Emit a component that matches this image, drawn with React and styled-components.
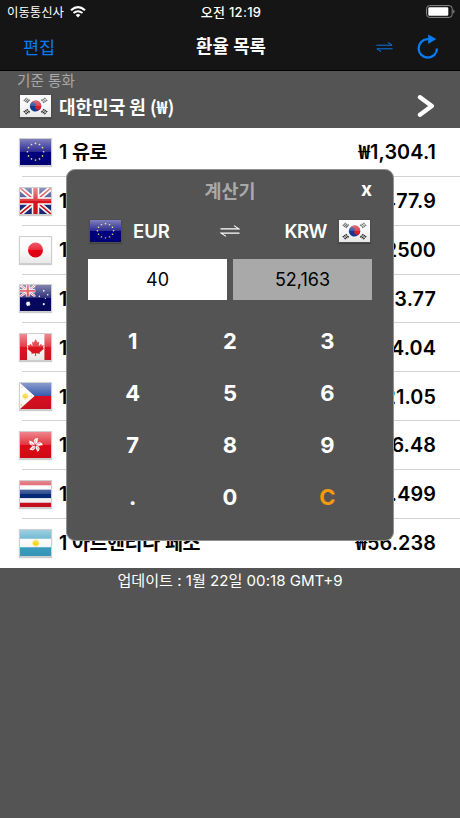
import React, { useState } from "react";
import styled, { createGlobalStyle } from "styled-components";

const stars = [...Array(12)].map((_, i) => {
  const a = (i * Math.PI) / 6;
  return [16.5 + 8.6 * Math.sin(a), 13.7 - 9 * Math.cos(a)];
});

const UnionJack = () => (
  <>
    <rect width="33" height="28" fill="#1b2a7c" />
    <path d="M0 0L33 28M33 0L0 28" stroke="#fff" strokeWidth="5.4" />
    <path d="M0 0L33 28M33 0L0 28" stroke="#d8141c" strokeWidth="1.8" />
    <path d="M16.5 0V28M0 14H33" stroke="#fff" strokeWidth="8" />
    <path d="M16.5 0V28M0 14H33" stroke="#d8141c" strokeWidth="4.6" />
  </>
);

const Trigram = ({ x, y, angle, broken }) => (
  <g transform={`translate(${x} ${y}) rotate(${angle})`}>
    <path
      d="M-2.6 -2H2.6M-2.6 0H2.6M-2.6 2H2.6"
      stroke="#2a2a2a"
      strokeWidth="1.4"
      strokeDasharray={broken ? "2.3 .6" : "none"}
    />
  </g>
);

const drawings = {
  eu: (
    <>
      <rect width="33" height="28" fill="#00007c" />
      {stars.map(([x, y]) => (
        <circle key={`${x}${y}`} cx={x} cy={y} r="0.9" fill="#e5dc70" />
      ))}
    </>
  ),
  gb: <UnionJack />,
  jp: (
    <>
      <rect width="33" height="28" fill="#fafafa" />
      <circle cx="16.5" cy="14" r="8" fill="#e60012" />
    </>
  ),
  au: (
    <>
      <rect width="33" height="28" fill="#05085f" />
      <clipPath id="canton">
        <rect width="33" height="28" />
      </clipPath>
      <g transform="scale(.5 .45)" clipPath="url(#canton)">
        <UnionJack />
      </g>
      <g fill="#fff">
        <path d="M8.4 17l.7 1.4 1.5-.3-.3 1.5 1.2 1-1.4.7.1 1.5-1.5-.6-1.4.7-.1-1.6-1.3-.8 1.2-1-.3-1.5 1.5.3z" />
        <circle cx="25.3" cy="6.3" r="0.9" />
        <circle cx="20.6" cy="12" r="0.8" />
        <circle cx="29.5" cy="10.5" r="0.9" />
        <circle cx="27" cy="14.4" r="0.6" />
        <circle cx="25.3" cy="20.6" r="1.1" />
      </g>
    </>
  ),
  ca: (
    <>
      <rect width="33" height="28" fill="#fafafa" />
      <path d="M0 0H7.5V28H0zM26 0H33V28H26z" fill="#dc1420" />
      <path
        d="M16.7 5.5l2 3.6 1.8-1-.6 5.2 2.6-2.7.7 1.7 2.3-.3-1.1 2.9 1.1.9-4.7 4 .5 1.6-4.2-.7v3h-.9v-3l-4.2.7.5-1.6-4.7-4 1.1-.9-1.1-2.9 2.3.3.7-1.7 2.6 2.7-.6-5.2 1.8 1z"
        fill="#dc1420"
      />
    </>
  ),
  ph: (
    <>
      <path d="M0 0H33V14H0z" fill="#123a9c" />
      <path d="M0 14H33V28H0z" fill="#d80f20" />
      <path d="M0 0L15.5 14L0 28z" fill="#fff" />
      <g fill="#f7dc3c">
        <circle cx="5.6" cy="14" r="2.7" />
        <circle cx="1.6" cy="4.5" r="0.9" />
        <circle cx="1.6" cy="23.5" r="0.9" />
        <circle cx="12" cy="14" r="0.8" />
      </g>
      <path
        d="M5.6 10V18M1.6 14H9.6M2.8 11.2L8.4 16.8M8.4 11.2L2.8 16.8"
        stroke="#f7dc3c"
        strokeWidth="0.8"
      />
    </>
  ),
  hk: (
    <>
      <rect width="33" height="28" fill="#dd0b16" />
      {[0, 72, 144, 216, 288].map((angle) => (
        <g key={angle} transform={`rotate(${angle + 12} 16.5 14)`}>
          <path d="M16.2 13.2C12.2 11 13.8 6.4 17.8 6.2C16.6 8 19.5 9.8 16.2 13.2z" fill="#fff" />
          <path d="M16 12C15 10.5 15.2 9.4 16 8.6" stroke="#dd0b16" strokeWidth="0.5" fill="none" />
        </g>
      ))}
    </>
  ),
  th: (
    <>
      <rect width="33" height="28" fill="#fafafa" />
      <path d="M0 0H33V4.7H0zM0 23.3H33V28H0z" fill="#d00f20" />
      <path d="M0 9.3H33V18.4H0z" fill="#062a78" />
    </>
  ),
  ar: (
    <>
      <rect width="33" height="28" fill="#fafafa" />
      <path d="M0 0H33V9.3H0zM0 18.7H33V28H0z" fill="#3ba0c4" />
      <circle cx="16.8" cy="14" r="3" fill="#f4d816" />
      <circle cx="16.8" cy="14" r="3.4" fill="none" stroke="#f4d816" strokeDasharray=".7 .6" />
    </>
  ),
  kr: (
    <>
      <rect width="33" height="28" fill="#f8f8f8" />
      <g transform="translate(16.5 14) scale(1 1.16) rotate(22)">
        <circle r="6.1" fill="#123a94" />
        <path
          d="M-6.1 0a6.1 6.1 0 0 1 12.2 0a3.05 3.05 0 0 1-6.1 0a3.05 3.05 0 0 0-6.1 0z"
          fill="#d9202c"
        />
      </g>
      <Trigram x={7.2} y={6.8} angle={-52} />
      <Trigram x={25.8} y={6.8} angle={52} broken />
      <Trigram x={7.2} y={21.2} angle={52} broken />
      <Trigram x={25.8} y={21.2} angle={-52} broken />
    </>
  ),
};

const Flag = ({ code, height = 28 }) => (
  <FlagFrame $height={height}>
    <svg viewBox="0 0 33 28" preserveAspectRatio="none">
      {drawings[code]}
    </svg>
  </FlagFrame>
);

const SwapIcon = ({ width = 20 }) => (
  <svg width={width} height="12" viewBox="0 0 20 12" fill="none" stroke="currentColor">
    <path d="M.5 3.9H19L14 .6M19.5 8.1H1L6 11.4" strokeWidth="1.1" />
  </svg>
);

const rates = [
  { code: "eu", name: "유로", value: "1,304.1" },
  { code: "gb", value: "1,477.9" },
  { code: "jp", value: "10.2500" },
  { code: "au", value: "833.77" },
  { code: "ca", value: "884.04" },
  { code: "ph", value: "21.05" },
  { code: "hk", value: "136.48" },
  { code: "th", value: "33.499" },
  { code: "ar", name: "아르헨티나 페소", value: "56.238" },
];

const keys = ["1", "2", "3", "4", "5", "6", "7", "8", "9", ".", "0", "C"];

const Calculator = ({ onClose }) => {
  const [amount, setAmount] = useState("40");

  const press = (key) => {
    if (key === "C") return setAmount("0");
    if (key === "." && amount.includes(".")) return;
    setAmount(amount === "0" && key !== "." ? key : amount + key);
  };

  const result = Math.floor(Number(amount) * 1304.09);

  return (
    <Popup>
      <PopupHeader>
        <h2>계산기</h2>
        <CloseButton onClick={onClose}>x</CloseButton>
      </PopupHeader>
      <Pair>
        <Currency>
          <Flag code="eu" height={24} />
          EUR
        </Currency>
        <SwapIcon />
        <Currency $end>
          KRW
          <Flag code="kr" height={24} />
        </Currency>
      </Pair>
      <Amounts>
        <Amount>{amount}</Amount>
        <Amount $result>{result.toLocaleString("en-US")}</Amount>
      </Amounts>
      <Keypad>
        {keys.map((key) => (
          <Key key={key} $clear={key === "C"} onClick={() => press(key)}>
            {key}
          </Key>
        ))}
      </Keypad>
    </Popup>
  );
};

const App = () => {
  const [open, setOpen] = useState(true);

  return (
    <Screen>
      <GlobalStyle />
      <StatusBar>
        <Carrier>
          이동통신사
          <svg width="16" height="12" viewBox="0 0 16 12" fill="none" stroke="#fff">
            <path d="M1 4.2Q8-2 15 4.2" strokeWidth="2.1" />
            <path d="M3.5 7.1Q8 3.3 12.5 7.1" strokeWidth="2" />
            <path d="M8 11.5L5.6 9Q8 7.1 10.4 9z" fill="#fff" stroke="none" />
          </svg>
        </Carrier>
        <Clock>오전 12:19</Clock>
        <Battery>
          <svg width="29" height="13" viewBox="0 0 29 13">
            <rect x=".6" y=".6" width="25.6" height="11.8" rx="3" fill="none" stroke="#8a8a8a" />
            <rect x="2.3" y="2.2" width="20" height="8.6" rx="1.2" fill="#fff" />
            <path d="M27.3 4.5Q28.6 5 28.6 6.5T27.3 8.5z" fill="#8a8a8a" />
          </svg>
        </Battery>
      </StatusBar>
      <NavBar>
        <NavButton>편집</NavButton>
        <h1>환율 목록</h1>
        <NavActions>
          <NavButton onClick={() => setOpen(!open)}>
            <SwapIcon width={17} />
          </NavButton>
          <NavButton>
            <svg width="22" height="26" viewBox="0 0 22 26" fill="none">
              <path
                d="M11.5 5.2H10.8A9.2 9.2 0 1 0 20 14.4"
                stroke="currentColor"
                strokeWidth="2.3"
              />
              <path d="M11.2 .5L19.3 5.1L11.2 10z" fill="currentColor" />
            </svg>
          </NavButton>
        </NavActions>
      </NavBar>
      <Base>
        <small>기준 통화</small>
        <BaseRow>
          <Flag code="kr" height={24} />
          <span>대한민국 원 (₩)</span>
          <svg width="18" height="22" viewBox="0 0 18 22" fill="none">
            <path
              d="M3 2.3L14.8 11L3 19.7"
              stroke="#fff"
              strokeWidth="4.4"
              strokeLinecap="round"
              strokeLinejoin="round"
            />
          </svg>
        </BaseRow>
      </Base>
      <List>
        {rates.map(({ code, name, value }) => (
          <Row key={code}>
            <Flag code={code} />
            <Name>1 {name}</Name>
            <Value>
              <Won>₩</Won>
              {value}
            </Value>
          </Row>
        ))}
      </List>
      <Updated>업데이트 : 1월 22일 00:18 GMT+9</Updated>
      {open && <Calculator onClose={() => setOpen(false)} />}
    </Screen>
  );
};

const GlobalStyle = createGlobalStyle`
  * {
    box-sizing: border-box;
  }

  body {
    margin: 0;
    background: #545454;
  }

  button {
    padding: 0;
    border: 0;
    background: none;
    color: inherit;
    font: inherit;
  }

  h1, h2 {
    margin: 0;
  }

  svg {
    display: block;
  }
`;

const Screen = styled.div`
  position: relative;
  display: flex;
  flex-direction: column;
  height: 818px;
  overflow: hidden;
  background: #545454;
  color: #fff;
  font-family: Inter, "Noto Sans CJK KR", sans-serif;
  white-space: nowrap;
`;

const StatusBar = styled.header`
  display: grid;
  grid-template-columns: 1fr auto 1fr;
  align-items: center;
  height: 23px;
  padding: 0 5px 0 7px;
  background: #151515;
`;

const Carrier = styled.div`
  display: flex;
  align-items: center;
  gap: 6px;
  font-size: 12.4px;
`;

const Clock = styled.div`
  font-size: 13px;
  font-weight: 500;
  letter-spacing: 0.3px;
`;

const Battery = styled.div`
  justify-self: end;
`;

const NavBar = styled.nav`
  display: grid;
  grid-template-columns: 1fr auto 1fr;
  align-items: center;
  height: 48px;
  padding: 0 21px 0 23px;
  border-bottom: 1px solid #000;
  background: #151515;

  h1 {
    font-size: 17.8px;
    font-weight: 600;
    line-height: 24px;
  }
`;

const NavButton = styled.button`
  justify-self: start;
  color: #087cf5;
  font-size: 17.5px;
`;

const NavActions = styled.div`
  display: flex;
  align-items: center;
  justify-self: end;
  gap: 24px;
`;

const Base = styled.section`
  height: 57px;

  small {
    display: block;
    padding-left: 17px;
    color: #a8a8a8;
    font-size: 14.6px;
    line-height: 20px;
  }
`;

const BaseRow = styled.div`
  display: flex;
  align-items: center;
  height: 30px;
  padding: 0 25px 0 19px;

  span {
    flex: 1;
    margin-left: 7px;
    font-family: "Noto Sans CJK KR", sans-serif;
    font-size: 18px;
    font-weight: 600;
  }
`;

const FlagFrame = styled.div`
  position: relative;
  flex: none;
  width: 33px;
  height: ${({ $height }) => $height}px;
  border: 1px solid rgba(60, 60, 60, 0.25);
  box-shadow: 0 1px 1px rgba(0, 0, 0, 0.2);

  svg {
    width: 100%;
    height: 100%;
  }

  &::after {
    content: "";
    position: absolute;
    inset: 0;
    background: linear-gradient(
      rgba(255, 255, 255, 0.5),
      rgba(255, 255, 255, 0.18) 48%,
      transparent 50%,
      rgba(0, 0, 0, 0.07)
    );
  }
`;

const List = styled.ul`
  flex: none;
  height: 439.5px;
  margin: 0;
  padding: 0;
  background: #fff;
  color: #000;
  list-style: none;
`;

const Row = styled.li`
  display: flex;
  align-items: center;
  height: 48.85px;
  padding: 0 24px 1px 19px;
  background: linear-gradient(#d2d2d2, #d2d2d2) 22px 100% / 100% 1px no-repeat;
  font-weight: 600;
  line-height: 28px;

  &:last-child {
    background: none;
  }
`;

const Name = styled.span`
  flex: 1;
  margin-left: 7px;
  padding-top: 1px;
  font-size: 19.6px;
  letter-spacing: -0.5px;
  word-spacing: 0.8px;
`;

const Value = styled.span`
  padding-top: 1px;
  font-size: 19.8px;
  letter-spacing: 0.1px;
`;

const Won = styled.span`
  font-family: "Noto Sans CJK KR", sans-serif;
  font-size: 19.5px;
  line-height: 0;
`;

const Updated = styled.footer`
  padding-top: 2px;
  font-size: 15.1px;
  line-height: 22px;
  text-align: center;
`;

const Popup = styled.section`
  position: absolute;
  top: 169px;
  left: 66px;
  width: 328px;
  height: 372px;
  padding: 0 21px;
  border: 1px solid #929292;
  border-radius: 9px;
  background: #545454;
`;

const PopupHeader = styled.div`
  display: grid;
  grid-template-columns: 1fr auto 1fr;
  align-items: center;
  height: 40px;

  h2 {
    grid-column: 2;
    color: #a9a9a9;
    font-size: 18.5px;
    font-weight: 600;
  }
`;

const CloseButton = styled.button`
  justify-self: end;
  padding-bottom: 2px;
  font-size: 19px;
  font-weight: 700;
`;

const Pair = styled.div`
  display: grid;
  grid-template-columns: 1fr auto 1fr;
  align-items: center;
  height: 42px;
  margin: 0 1px;
`;

const Currency = styled.div`
  display: flex;
  align-items: center;
  justify-self: ${({ $end }) => ($end ? "end" : "start")};
  gap: 11px;
  font-size: 18.5px;
  font-weight: 600;
  letter-spacing: ${({ $end }) => ($end ? "-0.5px" : "0")};
`;

const Amounts = styled.div`
  display: grid;
  grid-template-columns: 1fr 1fr;
  gap: 6px;
  margin-top: 7px;
`;

const Amount = styled.output`
  display: flex;
  align-items: center;
  justify-content: center;
  height: 41px;
  background: ${({ $result }) => ($result ? "#a9a9a9" : "#fff")};
  color: #000;
  font-size: 18px;
`;

const Keypad = styled.div`
  display: grid;
  grid-template-columns: repeat(3, 1fr);
  grid-auto-rows: 52px;
  margin: 15px -4px 0;
`;

const Key = styled.button`
  color: ${({ $clear }) => ($clear ? "#f59a0c" : "#fff")};
  font-size: 22px;
  font-weight: 700;
`;

export default App;
